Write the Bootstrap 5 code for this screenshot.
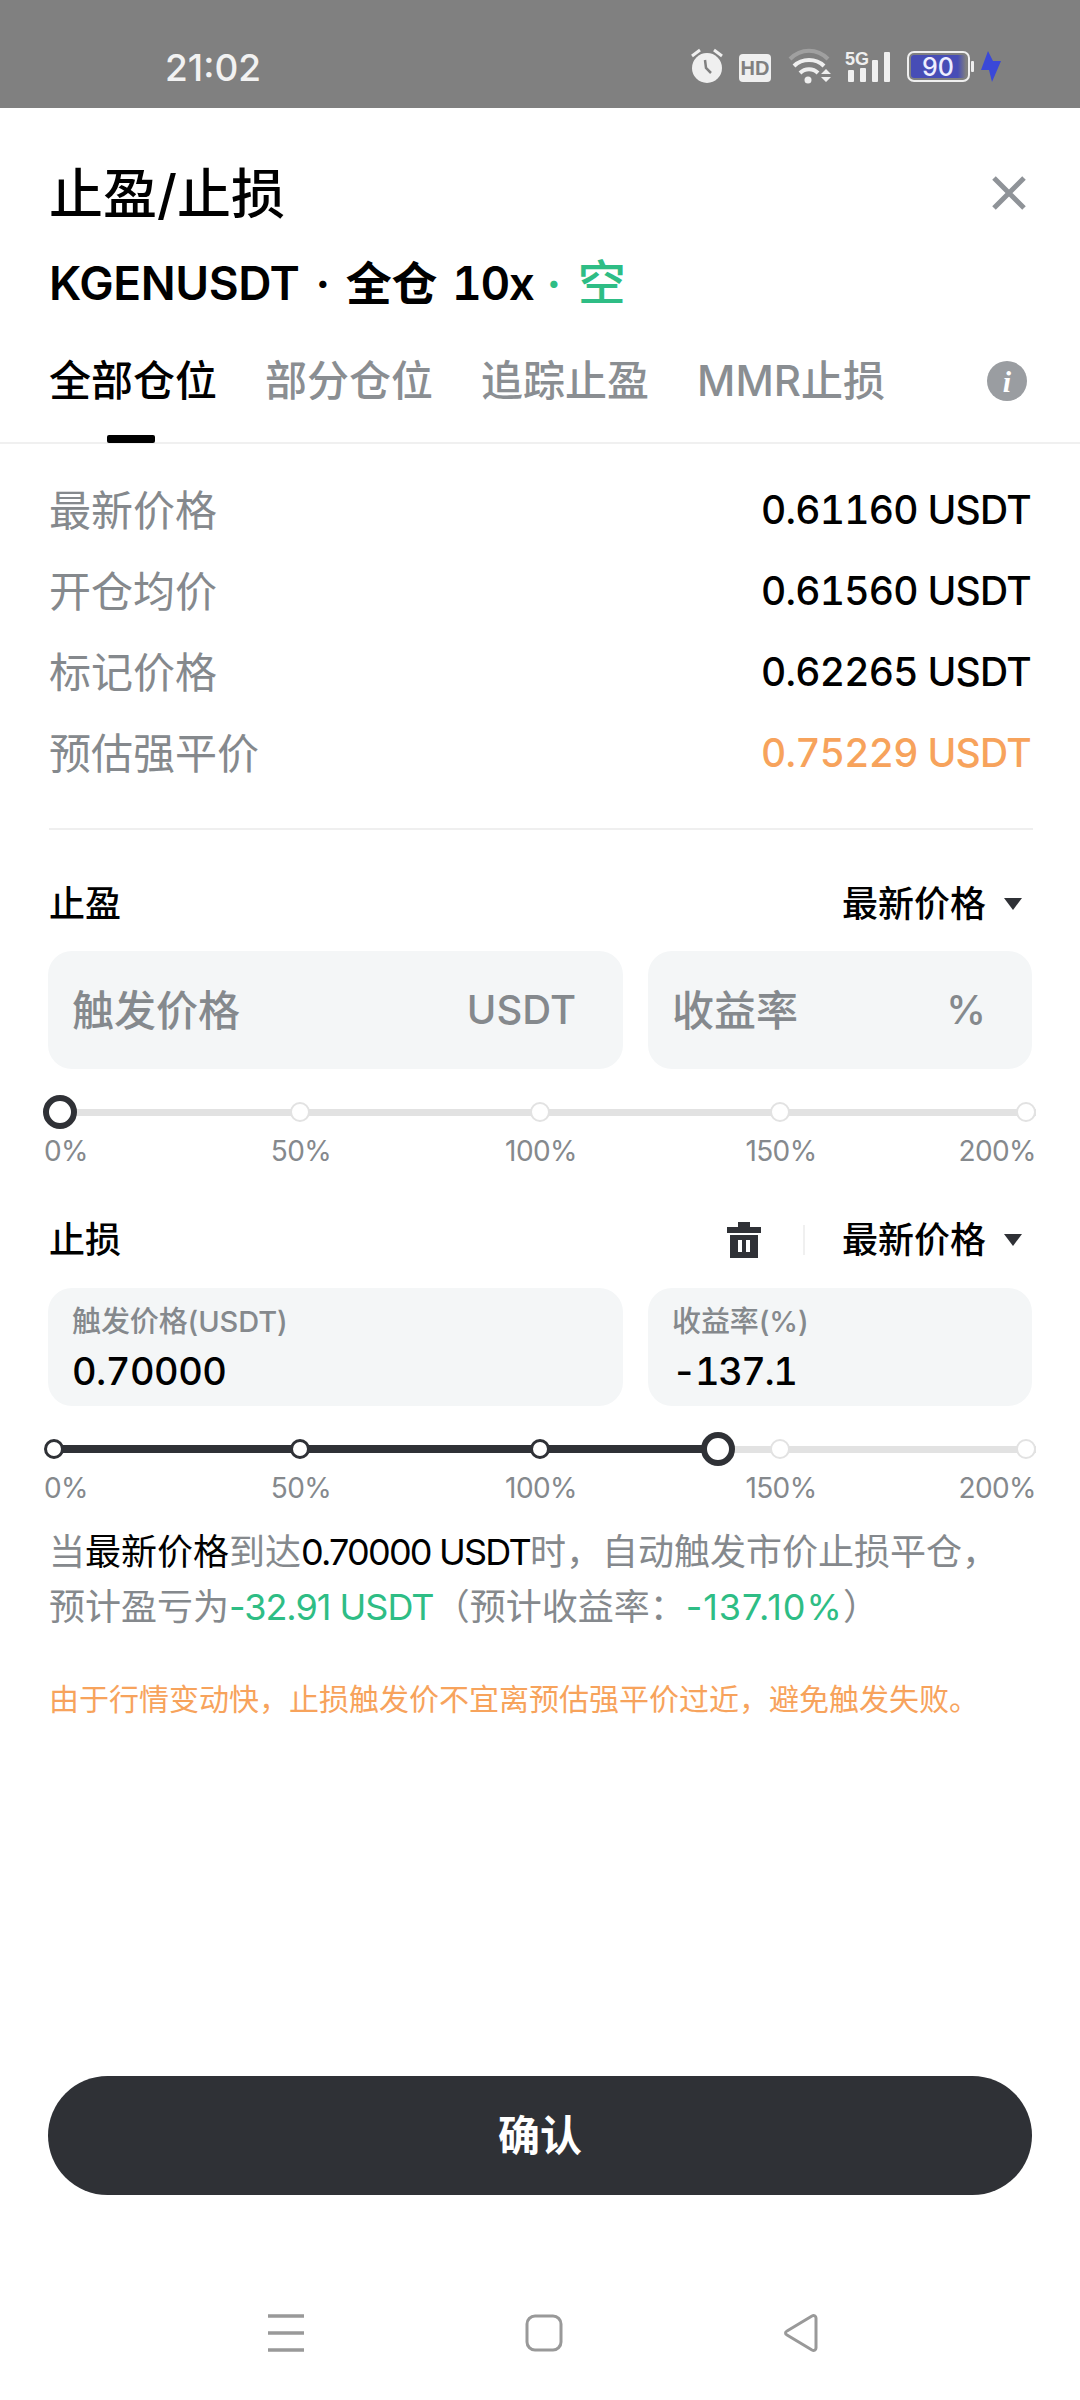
<!DOCTYPE html>
<html lang="zh">
<head>
  <meta charset="UTF-8">
  <title>止盈/止损</title>
  <link href="https://cdn.jsdelivr.net/npm/bootstrap@5.3.2/dist/css/bootstrap.min.css" rel="stylesheet">
  <style>
    body { width: 1080px; height: 2400px; overflow: hidden; background: #fff; color: #000; font-family: Inter, "Noto Sans CJK SC", sans-serif; }
    .status-bar { height: 108px; background: #808080; padding: 28px 75px 0 165px; color: #f2f2f2; font-size: 37px; font-weight: 500; }
    .status-bar svg { display: block; }
    .sheet-head { padding: 0 49px; }
    .sheet-title { font-size: 54px; font-weight: 500; line-height: 70px; margin: 0; padding-top: 52px; }
    .sheet-sub { font-size: 46px; font-weight: 600; line-height: 60px; margin-top: 23px; letter-spacing: -.4px; }
    .sheet-sub .dot-a { margin-left: 16px; }
    .sheet-sub .cross { margin-left: 16px; }
    .sheet-sub .lever { margin-left: 15px; font-variant-numeric: tabular-nums; letter-spacing: -1.4px; }
    .sheet-sub .dot-b { margin-left: 13px; color: #2ebd85; }
    .sheet-sub .short { margin-left: 17px; color: #2ebd85; font-weight: 500; font-size: 48px; }
    .tabs-bar { height: 91px; margin-top: 40px; padding: 0 49px; border-bottom: 2px solid #f0f0f0; position: relative; }
    .tab-item { font-size: 42px; color: #8a8e92; line-height: 56px; margin-right: 48px; font-weight: 500; }
    .tab-item.on { color: #000; }
    .tab-mark { position: absolute; left: 107px; bottom: -1px; width: 48px; height: 8px; border-radius: 2px; background: #000; }
    .info-rows { padding: 26px 49px 0 49px; }
    .info-row { height: 81px; }
    .info-row .lbl { font-size: 42px; color: #85898d; }
    .info-row .val { font-size: 39px; font-weight: 500; letter-spacing: -.75px; font-variant-numeric: tabular-nums; }
    .info-row .warn { color: #f7a35c; }
    .rule-line { height: 2px; background: #efefef; margin: 34px 47px 0 49px; }
    .sec-head { height: 56px; padding: 0 49px; font-size: 36px; font-weight: 500; }
    .sec-head.first-sec { margin-top: 46px; }
    .sec-head.second-sec { margin-top: 44px; }
    .sec-head .pick { font-size: 36px; font-weight: 500; }
    .caret-down { width: 0; height: 0; border-left: 9px solid transparent; border-right: 9px solid transparent; border-top: 12px solid #2f3136; margin-left: 18px; margin-right: 9px; }
    .vbar { width: 2px; height: 30px; background: #f0f0f0; margin: 0 37px 0 42px; }
    .field-row { padding: 0 48px; gap: 25px; margin-top: 19px; }
    .field-row.filled { margin-top: 20px; }
    .field-box { background: #f4f6f7; border-radius: 24px; height: 118px; padding: 0 24px; }
    .field-wide { width: 575px; }
    .field-wide.unit-pad { padding-right: 47px; }
    .field-narrow { width: 384px; padding-right: 46px; }
    .field-ph { font-size: 42px; color: #85898d; font-weight: 500; }
    .field-unit { font-size: 40px; color: #85898d; font-weight: 500; }
    .field-cap { font-size: 29px; color: #85898d; line-height: 36px; padding-top: 16px; font-weight: 500; letter-spacing: -.1px; }
    .field-val { font-size: 38px; font-weight: 500; line-height: 50px; margin-top: 6px; font-variant-numeric: tabular-nums; letter-spacing: -.5px; }
    .field-val.neg { letter-spacing: -1.5px; }
    .slider-wrap { position: relative; height: 34px; margin: 26px 44px 0; width: 992px; }
    .sl-line { position: absolute; left: 10px; right: 0; top: 14px; height: 7px; background: #e2e2e2; }
    .sl-fill { position: absolute; left: 10px; top: 13px; height: 8px; background: #2f3136; }
    .sl-dots { position: relative; height: 34px; gap: 220px; }
    .sl-dot { width: 20px; height: 20px; border-radius: 50%; background: #fff; border: 2px solid #e2e2e2; flex: none; }
    .sl-dot.first { margin-right: 6px; }
    .sl-dot.last { margin-left: 6px; }
    .sl-dot.done { border: 3px solid #2f3136; }
    .sl-thumb { position: absolute; top: 0; width: 34px; height: 34px; border-radius: 50%; background: #fff; border: 6px solid #2f3136; }
    .sl-labels { display: grid; grid-template-columns: 137px 240px 240px 240px 135px; margin: 5px 44px 0; width: 992px; font-size: 28px; line-height: 34px; color: #85898d; text-align: center; letter-spacing: -.6px; }
    .sl-labels span:first-child { text-align: left; }
    .sl-labels span:last-child { text-align: right; }
    .hint-text { padding: 0 49px; margin-top: 20px; font-size: 36px; line-height: 55px; color: #85898d; }
    .hint-text b { font-weight: 400; color: #000; }
    .hint-text b.num { letter-spacing: -1.8px; }
    .hint-text em { font-style: normal; color: #2ebd85; letter-spacing: -1px; }
    .hint-text em.rate { letter-spacing: 1px; }
    .alert-text { padding: 0 49px; margin-top: 44px; font-size: 30px; line-height: 40px; color: #f7a35c; }
    .confirm-btn { display: block; width: 984px; height: 119px; margin: 0 48px; border: 0; border-radius: 60px; background: #2f3136; color: #fff; font-size: 42px; font-weight: 600; position: absolute; left: 0; top: 2076px; }
    .nav-keys { position: absolute; left: 0; top: 2312px; width: 1080px; height: 42px; }
    .close-x { margin-top: 48px; margin-right: 5px; }
    .info-ico { margin-top: 7px; margin-right: 3px; }
  </style>
</head>
<body class="position-relative">

  <!-- status bar -->
  <div class="status-bar d-flex align-items-center justify-content-between">
    <span>21:02</span>
    <svg width="315" height="40" viewBox="690 50 315 40" xmlns="http://www.w3.org/2000/svg">
      <defs>
        <linearGradient id="battFill" x1="0" x2="1" y1="0" y2="0">
          <stop offset="0" stop-color="#474db6"/><stop offset=".85" stop-color="#474db6"/><stop offset="1" stop-color="#808080"/>
        </linearGradient>
      </defs>
      <!-- alarm -->
      <circle cx="707" cy="70" r="15" fill="#efefef"/>
      <path d="M692 58l8-6M722 58l-8-6" stroke="#efefef" stroke-width="3"/>
      <path d="M705 62l1 8 5 5" stroke="#808080" stroke-width="2.5" fill="none"/>
      <!-- hd -->
      <rect x="739" y="56" width="32" height="28" rx="4" fill="#efefef"/>
      <text x="755" y="77" text-anchor="middle" font-family="Liberation Sans" font-weight="700" font-size="20" fill="#808080">HD</text>
      <!-- wifi -->
      <path d="M790 61c11-11 27-11 38 0" stroke="#a0a0a0" stroke-width="4" fill="none"/>
      <path d="M794 68c8-8 22-8 30 0M800 75c5-5 13-5 18 0" stroke="#efefef" stroke-width="4" fill="none"/>
      <circle cx="808" cy="82" r="3.5" fill="#efefef"/>
      <path d="M821 76l5-5 5 5zM821 79h10l-5 5z" fill="#efefef"/>
      <!-- 5g -->
      <text x="845" y="67" font-family="Liberation Sans" font-weight="700" font-size="18" fill="#efefef">5G</text>
      <rect x="848" y="72" width="6" height="12" rx="1" fill="#efefef"/>
      <rect x="860" y="70" width="6" height="14" rx="1" fill="#efefef"/>
      <rect x="872" y="62" width="6" height="22" rx="1" fill="#efefef"/>
      <rect x="884" y="54" width="6" height="30" rx="1" fill="#efefef"/>
      <!-- battery -->
      <rect x="908" y="54" width="61" height="29" rx="6" fill="none" stroke="#efefef" stroke-width="2"/>
      <rect x="911" y="57" width="55" height="23" rx="3" fill="url(#battFill)"/>
      <rect x="971" y="63" width="3" height="11" rx="1" fill="#efefef"/>
      <text x="938" y="78" text-anchor="middle" font-family="Inter" font-size="25" fill="#eef">90</text>
      <!-- bolt -->
      <path d="M988 53l-7 19h8l3 12 9-21h-8z" fill="#3a48d8"/>
    </svg>
  </div>

  <!-- title -->
  <div class="sheet-head">
    <div class="d-flex justify-content-between align-items-center">
      <h1 class="sheet-title">止盈/止损</h1>
      <svg class="close-x" width="34" height="34" viewBox="0 0 34 34" xmlns="http://www.w3.org/2000/svg"><path d="M2 2l30 30M32 2L2 32" stroke="#8f9398" stroke-width="5"/></svg>
    </div>
    <div class="sheet-sub d-flex align-items-baseline">
      <span>KGENUSDT</span><span class="dot-a">·</span><span class="cross">全仓</span><span class="lever">10x</span><span class="dot-b">·</span><span class="short">空</span>
    </div>
  </div>

  <!-- tabs -->
  <div class="tabs-bar d-flex align-items-start">
    <span class="tab-item on">全部仓位</span>
    <span class="tab-item">部分仓位</span>
    <span class="tab-item">追踪止盈</span>
    <span class="tab-item">MMR止损</span>
    <svg class="ms-auto info-ico" width="42" height="42" viewBox="0 0 42 42" xmlns="http://www.w3.org/2000/svg">
      <circle cx="21" cy="21" r="20" fill="#9a9da1"/>
      <text x="21" y="32" text-anchor="middle" font-family="Liberation Serif" font-style="italic" font-weight="700" font-size="30" fill="#fff">i</text>
    </svg>
    <span class="tab-mark"></span>
  </div>

  <!-- price rows -->
  <div class="info-rows">
    <div class="info-row d-flex justify-content-between align-items-center"><span class="lbl">最新价格</span><span class="val">0.61160 USDT</span></div>
    <div class="info-row d-flex justify-content-between align-items-center"><span class="lbl">开仓均价</span><span class="val">0.61560 USDT</span></div>
    <div class="info-row d-flex justify-content-between align-items-center"><span class="lbl">标记价格</span><span class="val">0.62265 USDT</span></div>
    <div class="info-row d-flex justify-content-between align-items-center"><span class="lbl">预估强平价</span><span class="val warn">0.75229 USDT</span></div>
  </div>
  <div class="rule-line"></div>

  <!-- take profit -->
  <div class="sec-head first-sec d-flex align-items-center justify-content-between">
    <span>止盈</span>
    <span class="pick d-flex align-items-center">最新价格<i class="caret-down"></i></span>
  </div>
  <div class="field-row d-flex">
    <div class="field-box field-wide unit-pad d-flex align-items-center justify-content-between">
      <span class="field-ph">触发价格</span><span class="field-unit">USDT</span>
    </div>
    <div class="field-box field-narrow d-flex align-items-center justify-content-between">
      <span class="field-ph">收益率</span><span class="field-unit">%</span>
    </div>
  </div>
  <div class="slider-wrap">
    <div class="sl-line"></div>
    <div class="sl-dots d-flex align-items-center">
      <i class="sl-dot first"></i><i class="sl-dot"></i><i class="sl-dot"></i><i class="sl-dot"></i><i class="sl-dot last"></i>
    </div>
    <div class="sl-thumb" style="left:-1px"></div>
  </div>
  <div class="sl-labels"><span>0%</span><span>50%</span><span>100%</span><span>150%</span><span>200%</span></div>

  <!-- stop loss -->
  <div class="sec-head second-sec d-flex align-items-center">
    <span>止损</span>
    <svg class="ms-auto" width="34" height="36" viewBox="0 0 34 36" xmlns="http://www.w3.org/2000/svg">
      <path d="M11 0h12v5h11v6H0V5h11z" fill="#2f3136"/>
      <path fill-rule="evenodd" d="M3 13h28v23H3zM11 18v12h4V18zM19 18v12h4V18z" fill="#2f3136"/>
    </svg>
    <i class="vbar"></i>
    <span class="pick d-flex align-items-center">最新价格<i class="caret-down"></i></span>
  </div>
  <div class="field-row filled d-flex">
    <div class="field-box field-wide">
      <div class="field-cap">触发价格(USDT)</div>
      <div class="field-val">0.70000</div>
    </div>
    <div class="field-box field-narrow">
      <div class="field-cap">收益率(%)</div>
      <div class="field-val neg">-137.1</div>
    </div>
  </div>
  <div class="slider-wrap">
    <div class="sl-line"></div>
    <div class="sl-fill" style="width:664px"></div>
    <div class="sl-dots d-flex align-items-center">
      <i class="sl-dot first done"></i><i class="sl-dot done"></i><i class="sl-dot done"></i><i class="sl-dot"></i><i class="sl-dot last"></i>
    </div>
    <div class="sl-thumb" style="left:657px"></div>
  </div>
  <div class="sl-labels"><span>0%</span><span>50%</span><span>100%</span><span>150%</span><span>200%</span></div>

  <div class="hint-text">当<b>最新价格</b>到达<b class="num">0.70000 USDT</b>时，自动触发市价止损平仓，<br>预计盈亏为<em>-32.91 USDT</em>（预计收益率：<em class="rate">-137.10%</em>）</div>
  <div class="alert-text">由于行情变动快，止损触发价不宜离预估强平价过近，避免触发失败。</div>

  <button class="confirm-btn btn" type="button">确认</button>

  <!-- nav keys -->
  <svg class="nav-keys" viewBox="0 2312 1080 42" xmlns="http://www.w3.org/2000/svg">
    <path d="M268 2316h36M268 2333h36M268 2350h36" stroke="#999" stroke-width="3.5" fill="none"/>
    <rect x="527" y="2316" width="34" height="34" rx="8" fill="none" stroke="#999" stroke-width="3"/>
    <path d="M816 2318v30c0 2-2 3-4 2l-25-15c-2-1-2-3 0-4l25-15c2-1 4 0 4 2z" fill="none" stroke="#999" stroke-width="3" stroke-linejoin="round"/>
  </svg>
</body>
</html>
